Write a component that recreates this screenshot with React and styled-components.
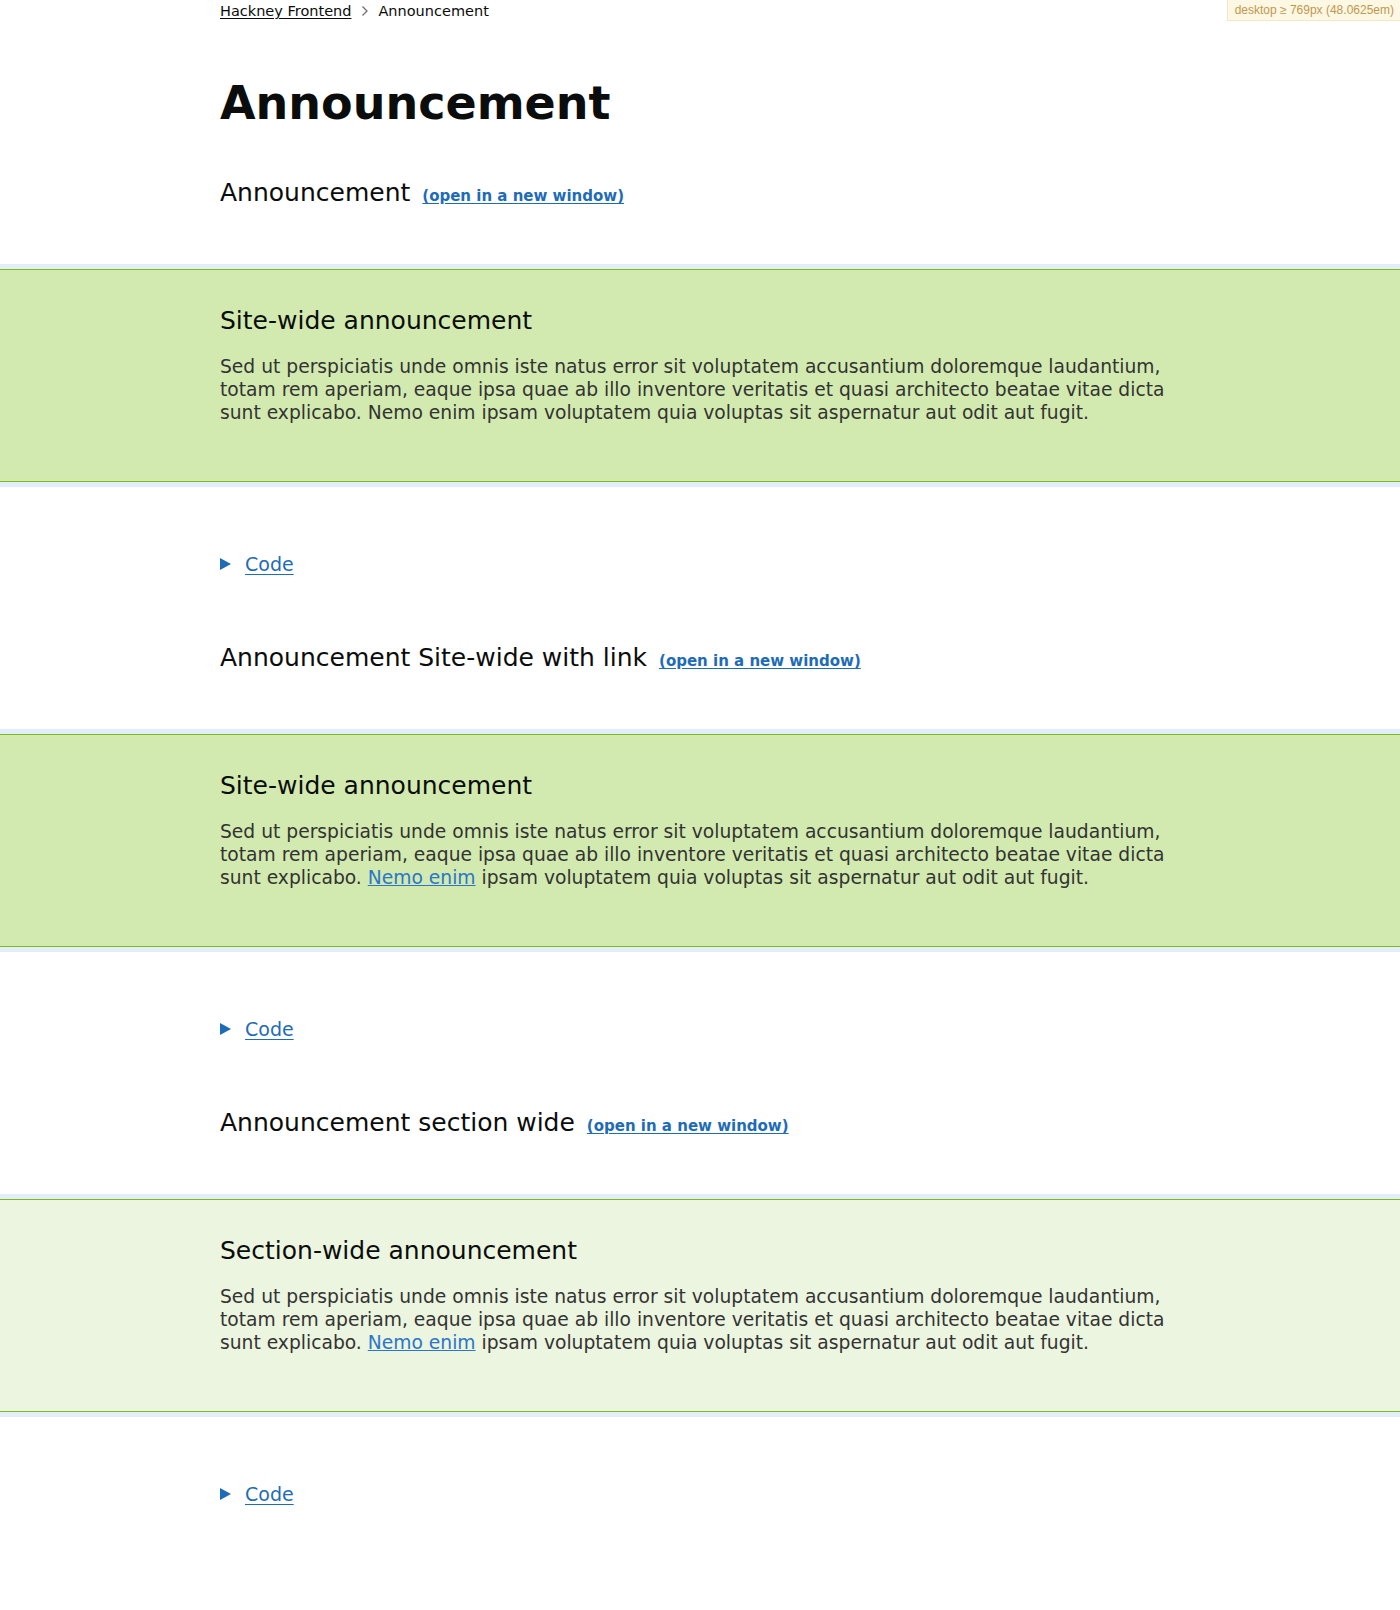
import React from "react";
import styled, { createGlobalStyle } from "styled-components";

const GlobalStyle = createGlobalStyle`
  body {
    margin: 0;
    background: #ffffff;
    font-family: "DejaVu Sans", "Noto Sans", sans-serif;
    color: #0b0c0c;
  }
`;

const LOREM_START =
  "Sed ut perspiciatis unde omnis iste natus error sit voluptatem accusantium doloremque laudantium, totam rem aperiam, eaque ipsa quae ab illo inventore veritatis et quasi architecto beatae vitae dicta sunt explicabo.";
const LOREM_END = "ipsam voluptatem quia voluptas sit aspernatur aut odit aut fugit.";

const examples = [
  {
    title: "Announcement",
    heading: "Site-wide announcement",
    variant: "site",
    withLink: false,
  },
  {
    title: "Announcement Site-wide with link",
    heading: "Site-wide announcement",
    variant: "site",
    withLink: true,
  },
  {
    title: "Announcement section wide",
    heading: "Section-wide announcement",
    variant: "section",
    withLink: true,
  },
];

const App = () => {
  return (
    <>
      <GlobalStyle />
      <Badge>desktop ≥ 769px (48.0625em)</Badge>
      <Container>
        <Breadcrumbs>
          <CrumbLink href="#">Hackney Frontend</CrumbLink>
          <Chevron viewBox="0 0 8 12" aria-hidden="true">
            <path d="M1.5 1.5 L6 6 L1.5 10.5" fill="none" stroke="#707070" strokeWidth="1.3" />
          </Chevron>
          <CrumbCurrent>Announcement</CrumbCurrent>
        </Breadcrumbs>
        <PageTitle>Announcement</PageTitle>
      </Container>

      {examples.map((item, index) => (
        <Example key={index}>
          <Container>
            <ExampleTitle>
              {item.title}
              <NewWindow href="#">(open in a new window)</NewWindow>
            </ExampleTitle>
          </Container>
          <Frame>
            <Announcement variant={item.variant}>
              <Container>
                <AnnouncementHeading>{item.heading}</AnnouncementHeading>
                <AnnouncementBody>
                  {LOREM_START}{" "}
                  {item.withLink ? (
                    <>
                      <InlineLink href="#">Nemo enim</InlineLink> {LOREM_END}
                    </>
                  ) : (
                    <>Nemo enim {LOREM_END}</>
                  )}
                </AnnouncementBody>
              </Container>
            </Announcement>
          </Frame>
          <Container>
            <CodeToggle>
              <Triangle />
              <CodeLabel href="#">Code</CodeLabel>
            </CodeToggle>
          </Container>
        </Example>
      ))}
      <Spacer />
    </>
  );
};
export default App;

const Container = styled.div`
  max-width: 960px;
  margin: 0 auto;
`;

const Badge = styled.div`
  position: absolute;
  top: 0;
  right: 0;
  padding: 4px 6px 4px 7px;
  background: #fcf8e3;
  border-left: 1px solid #f3e7c4;
  border-bottom: 1px solid #f3e7c4;
  color: #c4964e;
  font-family: "Liberation Sans", Arial, sans-serif;
  font-size: 12px;
  line-height: 12px;
`;

const Breadcrumbs = styled.div`
  display: flex;
  align-items: center;
  padding-top: 2px;
  font-size: 14.5px;
  line-height: 18px;
`;

const CrumbLink = styled.a`
  color: #0b0c0c;
  text-decoration: underline;
  text-underline-offset: 2px;
`;

const Chevron = styled.svg`
  width: 8px;
  height: 12px;
  margin: 0 9px 0 10px;
`;

const CrumbCurrent = styled.span`
  color: #0b0c0c;
`;

const PageTitle = styled.h1`
  margin: 56px 0 48px;
  font-size: 46px;
  line-height: 54px;
  font-weight: 700;
`;

const Example = styled.section``;

const ExampleTitle = styled.h2`
  display: flex;
  align-items: baseline;
  margin: 0;
  font-size: 25px;
  line-height: 30px;
  font-weight: 400;
`;

const NewWindow = styled.a`
  margin-left: 12px;
  font-size: 15px;
  font-weight: 700;
  color: #1e6bb8;
  text-decoration: underline;
  text-underline-offset: 2px;
`;

const Frame = styled.div`
  margin-top: 53px;
  padding: 5px 0;
  background: #e2eefa;
`;

const Announcement = styled.div`
  background: ${(props) => (props.variant === "section" ? "#ecf5df" : "#d2eaaf")};
  border-top: 1px solid #7fbb16;
  border-bottom: 1px solid #7fbb16;
  padding: 36px 0 57px;
`;

const AnnouncementHeading = styled.h3`
  margin: 0 0 19px;
  font-size: 25px;
  line-height: 30px;
  font-weight: 400;
  color: #0b0c0c;
`;

const AnnouncementBody = styled.p`
  margin: 0;
  font-size: 18.7px;
  line-height: 23px;
  color: #333333;
`;

const InlineLink = styled.a`
  color: #2b76c8;
  text-decoration: underline;
`;

const CodeToggle = styled.div`
  display: flex;
  align-items: center;
  margin: 64px 0 67px;
  height: 25px;
`;

const Triangle = styled.span`
  width: 0;
  height: 0;
  border-top: 6px solid transparent;
  border-bottom: 6px solid transparent;
  border-left: 11px solid #1e6bb8;
  margin-right: 14px;
`;

const CodeLabel = styled.a`
  font-size: 19px;
  color: #1e6bb8;
  text-decoration: underline;
  text-underline-offset: 3px;
`;

const Spacer = styled.div`
  height: 40px;
`;
